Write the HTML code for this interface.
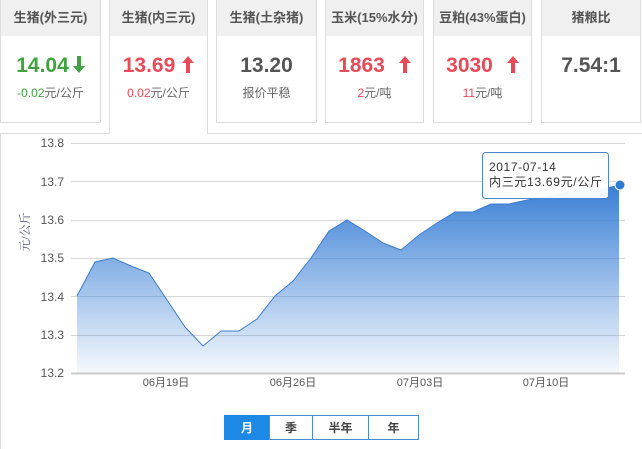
<!DOCTYPE html><html><head><meta charset="utf-8"><style>
body{margin:0;width:642px;height:449px;overflow:hidden;background:#fff;font-family:"Liberation Sans","Noto Sans CJK SC",sans-serif;position:relative}
.card{position:absolute;top:0;height:123px;border:1px solid #ddd;border-top:none;background:#fff;text-align:center;box-sizing:border-box}
.card .h{height:36px;background:#f0f0f0;line-height:36px;font-size:13px;font-weight:bold;color:#555}
.card .v{margin-top:17px;font-size:21px;font-weight:bold;color:#555;height:26px;line-height:26px}
.card .s{font-size:12px;color:#666;margin-top:5px}
.r{color:#e84a57!important}.g{color:#3fa33f!important}
.act{height:134px;border-bottom:none;z-index:2}
.btn{position:absolute;top:415px;height:25px;line-height:25px;text-align:center;font-size:12px;font-weight:bold;color:#444;border:1px solid #4a8fd6;box-sizing:border-box;background:#fff}
.ar{display:inline-block;vertical-align:-1px;margin-left:4px}
</style></head><body>
<div style="position:absolute;left:0;top:133px;width:642px;height:316px;border-top:1px solid #ddd;border-left:1px solid #ddd;box-sizing:border-box"></div>
<div class="card" style="left:0;width:101px"><div class="h">生猪(外三元)</div><div class="v g">14.04<svg class="ar" width="12" height="17" viewBox="0 0 12 17"><path d="M4 0h4v10h4l-6 7-6-7h4z" fill="#3fa33f"/></svg></div><div class="s"><span class="g">-0.02</span>元/公斤</div></div>
<div class="card act" style="left:109px;width:99px"><div class="h">生猪(内三元)</div><div class="v r">13.69<svg class="ar" style="margin-left:7px" width="12" height="17" viewBox="0 0 12 17"><path d="M4 17h4V7h4L6 0 0 7h4z" fill="#e84a57"/></svg></div><div class="s"><span class="r">0.02</span>元/公斤</div></div>
<div class="card" style="left:216px;width:101px"><div class="h">生猪(土杂猪)</div><div class="v">13.20</div><div class="s">报价平稳</div></div>
<div class="card" style="left:325px;width:99px"><div class="h">玉米(15%水分)</div><div class="v r">1863<svg class="ar" style="margin-left:14px" width="12" height="17" viewBox="0 0 12 17"><path d="M4 17h4V7h4L6 0 0 7h4z" fill="#e84a57"/></svg></div><div class="s"><span class="r">2</span>元/吨</div></div>
<div class="card" style="left:433px;width:99px"><div class="h">豆粕(43%蛋白)</div><div class="v r">3030<svg class="ar" style="margin-left:14px" width="12" height="17" viewBox="0 0 12 17"><path d="M4 17h4V7h4L6 0 0 7h4z" fill="#e84a57"/></svg></div><div class="s"><span class="r">11</span>元/吨</div></div>
<div class="card" style="left:541px;width:100px"><div class="h">猪粮比</div><div class="v">7.54:1</div></div>
<svg style="position:absolute;left:0;top:0" width="642" height="449">
<defs><linearGradient id="gr" x1="0" y1="0" x2="0" y2="1"><stop offset="0" stop-color="#3a7fd5"/><stop offset="1" stop-color="#3a7fd5" stop-opacity="0.05"/></linearGradient></defs>
<g stroke="#d8d8d8" stroke-width="1">
<line x1="71" x2="625" y1="143.5" y2="143.5"/><line x1="71" x2="625" y1="181.5" y2="181.5"/><line x1="71" x2="625" y1="220.5" y2="220.5"/><line x1="71" x2="625" y1="258.5" y2="258.5"/><line x1="71" x2="625" y1="296.5" y2="296.5"/><line x1="71" x2="625" y1="335.5" y2="335.5"/><line x1="71" x2="625" y1="373.5" y2="373.5" stroke="#ccc" stroke-width="2"/></g>
<polygon fill="url(#gr)" points="77,373 77,296 95,262 113,258 131,266 149,273 167,300 185,327 203,346 221,331 239,331 257,319 275,296 293,281 311,258 329,231 347,220 365,231 383,243 401,250 419,235 437,223 455,212 473,212 491,204 509,204 527,200 545,197 563,193 581,188 599,190 619,185 619,373"/>
<polyline fill="none" stroke="#3d7cc9" stroke-width="1" points="77,296 95,262 113,258 131,266 149,273 167,300 185,327 203,346 221,331 239,331 257,319 275,296 293,281 311,258 329,231 347,220 365,231 383,243 401,250 419,235 437,223 455,212 473,212 491,204 509,204 527,200 545,197 563,193 581,188 599,190 619,185"/>
<circle cx="620" cy="185" r="5" fill="#2e7bd6" stroke="#fff" stroke-width="1"/>
<g font-size="12" fill="#555" text-anchor="end" font-family="Liberation Sans,sans-serif">
<text x="64" y="147">13.8</text><text x="64" y="186">13.7</text><text x="64" y="224">13.6</text><text x="64" y="262">13.5</text><text x="64" y="301">13.4</text><text x="64" y="339">13.3</text><text x="64" y="377">13.2</text></g>
<text transform="translate(29,232) rotate(-90)" text-anchor="middle" font-size="12" fill="#557" font-family="Liberation Serif,Noto Serif CJK SC,serif">元/公斤</text>
<g font-size="11" fill="#555" text-anchor="middle"><text x="166" y="386">06月19日</text><text x="293" y="386">06月26日</text><text x="420" y="386">07月03日</text><text x="546" y="386">07月10日</text></g>
<rect x="482.5" y="152.5" width="126" height="46" rx="3" fill="#fff" fill-opacity="0.95" stroke="#4a86cf"/>
<text x="489" y="171" font-size="12" fill="#333" letter-spacing="0.6">2017-07-14</text>
<text x="489" y="186" font-size="12" fill="#333" textLength="113">内三元13.69元/公斤</text>
</svg>
<div class="btn" style="left:224px;width:46px;background:#1e88e5;color:#fff;border-color:#1e88e5">月</div>
<div class="btn" style="left:269px;width:44px">季</div>
<div class="btn" style="left:312px;width:57px">半年</div>
<div class="btn" style="left:368px;width:51px">年</div>
</body></html>
